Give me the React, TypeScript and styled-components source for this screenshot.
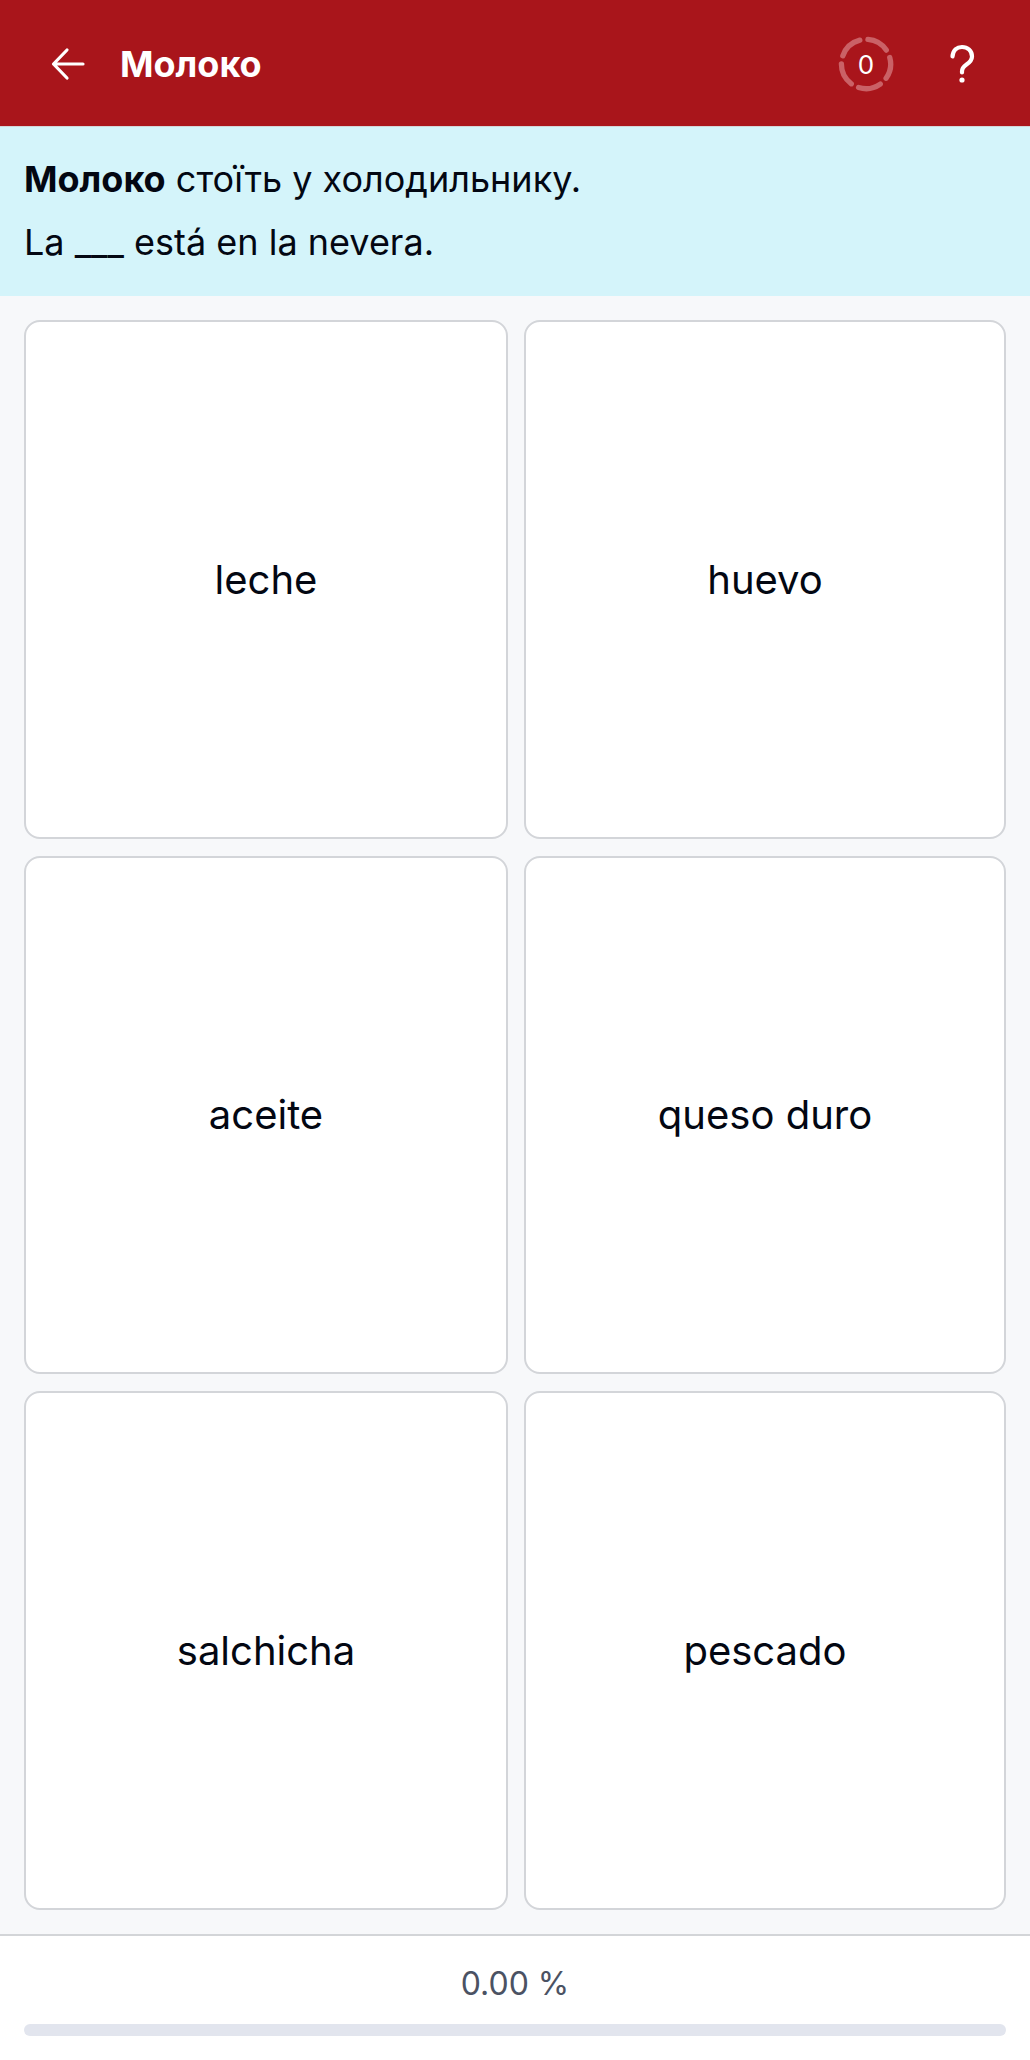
import styled, { createGlobalStyle } from "styled-components";

const GlobalStyle = createGlobalStyle`
  html, body {
    margin: 0;
    padding: 0;
    background: #f7f8fa;
  }
  * {
    box-sizing: border-box;
  }
`;

const Page = styled.div`
  width: 1030px;
  height: 2060px;
  display: flex;
  flex-direction: column;
  font-family: Inter, "Noto Sans", sans-serif;
  color: #030712;
`;

const Header = styled.header`
  height: 127px;
  flex-shrink: 0;
  display: flex;
  align-items: center;
  padding: 2px 53px 0 48px;
  background: #a9151b;
  border-bottom: 1px solid #d3d5d8;
  color: #fff;
`;

const BackIcon = styled.svg`
  width: 36px;
  height: 36px;
  flex-shrink: 0;
  margin-left: 2px;
`;

const Title = styled.h1`
  margin: 0 0 0 34px;
  flex: 1;
  font-size: 36px;
  font-weight: 700;
`;

const Score = styled.div`
  position: relative;
  width: 56px;
  height: 56px;
  margin-right: 53px;
  display: flex;
  align-items: center;
  justify-content: center;
  font-size: 26px;
`;

const ScoreRing = styled.svg`
  position: absolute;
  inset: 0;
`;

const HelpIcon = styled.svg`
  width: 30px;
  height: 40px;
  flex-shrink: 0;
`;

const Prompt = styled.section`
  height: 169px;
  flex-shrink: 0;
  padding: 20px 24px 0;
  background: #d4f4fa;
  font-size: 36px;
  line-height: 64px;
`;

const Line = styled.div`
  height: 63px;
`;

const Grid = styled.main`
  flex: 1;
  display: grid;
  grid-template-columns: 484px 1fr;
  grid-auto-rows: 1fr;
  gap: 17px 16px;
  padding: 24px 24px 24px;
`;

const Card = styled.button`
  display: flex;
  align-items: center;
  justify-content: center;
  padding: 0;
  background: #fff;
  border: 2px solid #d3d5d9;
  border-radius: 16px;
  color: #030712;
  font-family: inherit;
  font-size: 40px;
`;

const Footer = styled.footer`
  height: 126px;
  flex-shrink: 0;
  padding: 0 24px;
  background: #fff;
  border-top: 2px solid #d3d5d8;
`;

const Percent = styled.div`
  height: 88px;
  padding-top: 6px;
  display: flex;
  align-items: center;
  justify-content: center;
  color: #4b5263;
  font-size: 32px;
`;

const Track = styled.div`
  height: 12px;
  border-radius: 6px;
  background: #e2e5ee;
`;

const options = ["leche", "huevo", "aceite", "queso duro", "salchicha", "pescado"];

export default function App() {
  return (
    <>
      <GlobalStyle />
      <Page>
        <Header>
          <BackIcon viewBox="0 0 36 36" fill="none" stroke="#fff" strokeWidth="3.2" strokeLinecap="round" strokeLinejoin="round">
            <path d="M33 18H3.5M17 4 3.5 18 17 32" />
          </BackIcon>
          <Title>Молоко</Title>
          <Score>
            <ScoreRing viewBox="0 0 58 58" fill="none" stroke="#ca6166" strokeWidth="5.5" strokeLinecap="round">
              <path d="M31 3.6A25.5 25.5 0 0 1 50 14.6" />
              <path d="M53.6 22.2A25.5 25.5 0 0 1 49.8 43.8" />
              <path d="M43.8 49.8A25.5 25.5 0 0 1 21.3 53.3" />
              <path d="M13.8 49.5A25.5 25.5 0 0 1 3.5 28.8" />
              <path d="M5 20.5A25.5 25.5 0 0 1 22.6 4.3" />
            </ScoreRing>
            0
          </Score>
          <HelpIcon viewBox="0 0 30 40" fill="none" stroke="#fff" strokeWidth="4.2" strokeLinecap="round">
            <path d="M5.5 12.5C6 6 10 3 15 3c5.5 0 10 3.5 10 9.5 0 4-2.5 6-5.5 8-2.5 1.7-4.5 3.5-4.5 7v1" />
            <circle cx="15" cy="36" r="2.6" fill="#fff" stroke="none" />
          </HelpIcon>
        </Header>
        <Prompt>
          <Line>
            <strong>Молоко</strong> стоїть у холодильнику.
          </Line>
          <Line>La ___ está en la nevera.</Line>
        </Prompt>
        <Grid>
          {options.map((option) => (
            <Card key={option}>{option}</Card>
          ))}
        </Grid>
        <Footer>
          <Percent>0.00 %</Percent>
          <Track />
        </Footer>
      </Page>
    </>
  );
}
